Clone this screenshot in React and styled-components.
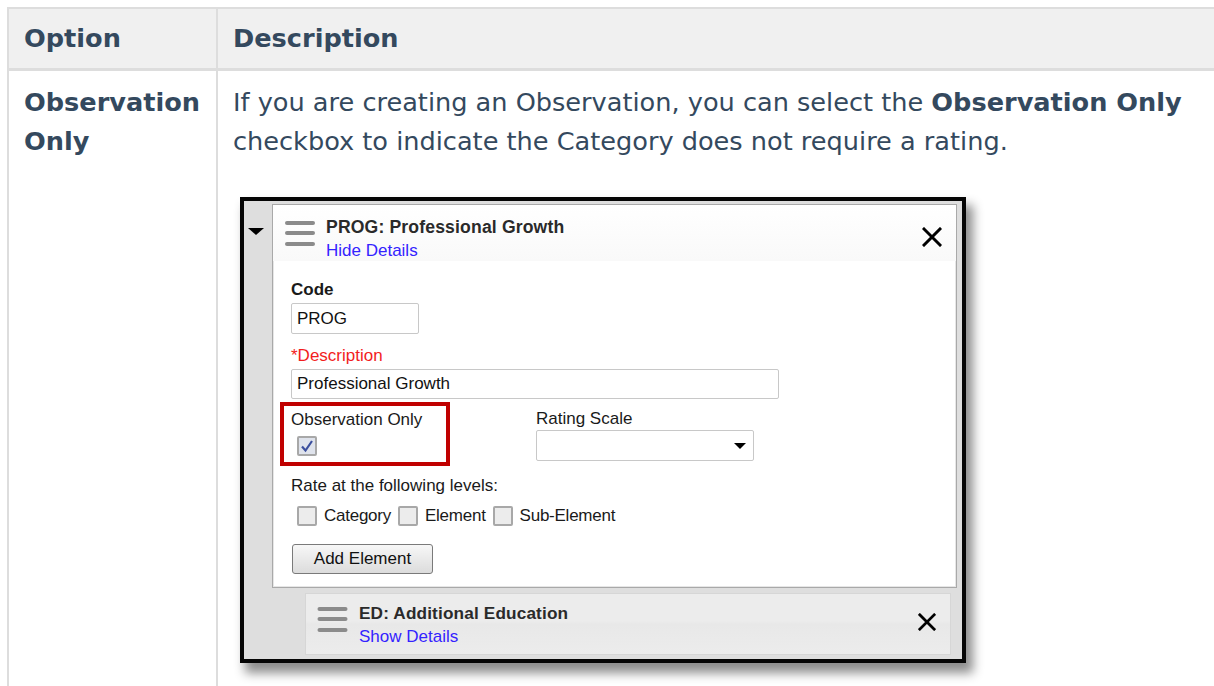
import React from "react"
import styled, { createGlobalStyle } from "styled-components"

const GlobalStyle = createGlobalStyle`
    body {
        margin: 0;
        background: #fff;
        overflow: hidden;
        font-family: "DejaVu Sans", sans-serif;
    }
`;

const HamburgerIcon = ({ width = 30 }) =>
    <Hamburger width={width} height="28" viewBox="0 0 30 28">
        <line x1="2" y1="4" x2="28" y2="4"/>
        <line x1="2" y1="14" x2="28" y2="14"/>
        <line x1="2" y1="25" x2="28" y2="25"/>
    </Hamburger>;

const CloseIcon = ({ size = 20 }) =>
    <svg width={size} height={size} viewBox="0 0 20 20">
        <path d="M2 2 L18 18 M18 2 L2 18" stroke="#000" strokeWidth="3" strokeLinecap="square"/>
    </svg>;

const CheckBox = ({ checked }) =>
    <Box checked={checked}>
        {checked &&
            <svg width="14" height="14" viewBox="0 0 14 14">
                <path d="M2 7.5 L5.5 11.5 L12 2" fill="none" stroke="#3b4f9e" strokeWidth="2.2"/>
            </svg>}
    </Box>;

const CategoryEditor = () =>
    <Frame>
        <Strip>
            <Caret/>
        </Strip>
        <Stack>
            <Panel>
                <PanelHeader>
                    <HamburgerIcon/>
                    <HeaderText>
                        <ItemTitle size={17.6}>PROG: Professional Growth</ItemTitle>
                        <ItemLink>Hide Details</ItemLink>
                    </HeaderText>
                    <CloseSlot><CloseIcon/></CloseSlot>
                </PanelHeader>
                <PanelBody>
                    <FieldLabel bold>Code</FieldLabel>
                    <Input width={128}>PROG</Input>
                    <FieldLabel required top={11}>*Description</FieldLabel>
                    <Input width={488} height={30}>Professional Growth</Input>
                    <FieldRow>
                        <Highlight>
                            <FieldLabel>Observation Only</FieldLabel>
                            <CheckIndent><CheckBox checked/></CheckIndent>
                        </Highlight>
                        <RatingColumn>
                            <FieldLabel>Rating Scale</FieldLabel>
                            <Select>
                                <SelectArrow/>
                            </Select>
                        </RatingColumn>
                    </FieldRow>
                    <FieldLabel top={9}>Rate at the following levels:</FieldLabel>
                    <LevelRow>
                        <CheckBox/><span>Category</span>
                        <CheckBox/><span>Element</span>
                        <CheckBox/><span>Sub-Element</span>
                    </LevelRow>
                    <Button>Add Element</Button>
                </PanelBody>
            </Panel>
            <CollapsedItem>
                <HamburgerIcon width={31}/>
                <HeaderText>
                    <ItemTitle size={17.2}>ED: Additional Education</ItemTitle>
                    <ItemLink>Show Details</ItemLink>
                </HeaderText>
                <CloseSlot><CloseIcon size={18}/></CloseSlot>
            </CollapsedItem>
        </Stack>
    </Frame>;

const App = () =>
    <>
        <GlobalStyle/>
        <Table>
            <thead>
                <tr>
                    <HeadCell first>Option</HeadCell>
                    <HeadCell>Description</HeadCell>
                </tr>
            </thead>
            <tbody>
                <tr>
                    <Cell first><strong>Observation Only</strong></Cell>
                    <Cell>
                        <Paragraph>
                            If you are creating an Observation, you can select the <strong>Observation Only</strong> checkbox to indicate the Category does not require a rating.
                        </Paragraph>
                        <CategoryEditor/>
                    </Cell>
                </tr>
            </tbody>
        </Table>
    </>;

const Table = styled.table`
    margin: 7px 0 0 7px;
    width: 1240px;
    border-collapse: collapse;
    color: #34495e;
    font-size: 25.6px;
    line-height: 38.4px;
`;

const HeadCell = styled.th`
    text-align: left;
    font-weight: bold;
    background: #f0f0f0;
    padding: 10px 15px 11px;
    border-top: 2px solid #ddd;
    border-bottom: 3px solid #ddd;
    border-left: 2px solid #ddd;
    width: ${props => props.first ? "177px" : "auto"};
`;

const Cell = styled.td`
    vertical-align: top;
    padding: 12px 15px 0;
    border-left: 2px solid #ddd;
    strong { font-weight: bold; }
`;

const Paragraph = styled.p`
    margin: 0 0 37px;
`;

/* embedded form screenshot */
const Frame = styled.div`
    width: 726px;
    height: 466px;
    box-sizing: border-box;
    margin: 0 0 40px 7px;
    border: 4px solid #050505;
    background: #dedede;
    box-shadow: 6px 9px 10px 1px rgba(0, 0, 0, 0.45);
    display: flex;
    font-family: "Liberation Sans", Arial, sans-serif;
    font-size: 17px;
    line-height: 22px;
    color: #1a1a1a;
`;

const Strip = styled.div`
    width: 28px;
    padding-top: 27px;
    display: flex;
    justify-content: center;
    align-items: flex-start;
`;

const Caret = styled.div`
    width: 0;
    height: 0;
    margin-left: -4px;
    border-left: 8px solid transparent;
    border-right: 8px solid transparent;
    border-top: 7px solid #000;
`;

const Stack = styled.div`
    flex: 1;
    padding: 3px 5px 0 0;
    display: flex;
    flex-direction: column;
    gap: 5px;
`;

const Panel = styled.div`
    height: 384px;
    box-sizing: border-box;
    background: #fff;
    border: 1px solid #a9a9a9;
    box-shadow: inset 0 0 0 1px #e6e6e6;
`;

const PanelHeader = styled.div`
    height: 56px;
    box-sizing: border-box;
    padding: 11px 0 0 12px;
    display: flex;
    align-items: flex-start;
    background: linear-gradient(#fff, #f9f9f9);
`;

const Hamburger = styled.svg`
    flex: none;
    margin: 3px 11px 0 0;
    line {
        stroke: #8b8b8b;
        stroke-width: 4;
        stroke-linecap: round;
    }
`;

const HeaderText = styled.div`
    flex: 1;
    display: flex;
    flex-direction: column;
    line-height: 23px;
`;

const ItemTitle = styled.span`
    font-weight: bold;
    font-size: ${props => props.size}px;
    letter-spacing: 0.15px;
    color: #2a2a2a;
`;

const ItemLink = styled.span`
    color: #3423ff;
`;

const CloseSlot = styled.div`
    padding: 11px 14px 0 0;
`;

const PanelBody = styled.div`
    padding: 18px 0 0 18px;
    display: flex;
    flex-direction: column;
    align-items: flex-start;
`;

const FieldLabel = styled.div`
    margin-top: ${props => props.top || 0}px;
    font-weight: ${props => props.bold ? "bold" : "normal"};
    color: ${props => props.required ? "#f21d1d" : "#1a1a1a"};
    white-space: nowrap;
`;

const Input = styled.div`
    width: ${props => props.width}px;
    height: ${props => props.height || 31}px;
    box-sizing: border-box;
    margin-top: 2px;
    padding: 0 5px;
    border: 1px solid #c8c8c8;
    border-radius: 2px;
    display: flex;
    align-items: center;
    color: #111;
`;

const FieldRow = styled.div`
    margin-top: 3px;
    display: flex;
    align-items: flex-start;
`;

const Highlight = styled.div`
    width: 170px;
    height: 64px;
    box-sizing: border-box;
    margin-left: -11px;
    padding: 3px 0 0 7px;
    border: 4px solid #c00000;
`;

const CheckIndent = styled.div`
    margin: 5px 0 0 6px;
`;

const Box = styled.span`
    width: 20px;
    height: 20px;
    box-sizing: border-box;
    flex: none;
    border: 2px solid #a8a8a8;
    border-radius: 2px;
    background: ${props => props.checked ? "#dfe3ec" : "#ececec"};
    display: flex;
    align-items: center;
    justify-content: center;
`;

const RatingColumn = styled.div`
    margin-left: 86px;
    padding-top: 6px;
`;

const Select = styled.div`
    width: 218px;
    height: 31px;
    box-sizing: border-box;
    border: 1px solid #c8c8c8;
    border-radius: 2px;
    display: flex;
    align-items: center;
    justify-content: flex-end;
    padding-right: 7px;
`;

const SelectArrow = styled.div`
    width: 0;
    height: 0;
    border-left: 6px solid transparent;
    border-right: 6px solid transparent;
    border-top: 6px solid #000;
`;

const LevelRow = styled.div`
    margin: 8px 0 0 6px;
    display: flex;
    align-items: center;
    gap: 5px;
    letter-spacing: -0.25px;
    span { margin-right: 2px; }
`;

const Button = styled.div`
    margin: 17px 0 0 1px;
    width: 141px;
    height: 30px;
    box-sizing: border-box;
    border: 1px solid #7a7a7a;
    border-radius: 3px;
    background: linear-gradient(#f7f7f7, #dcdcdc);
    display: flex;
    align-items: center;
    justify-content: center;
    color: #111;
`;

const CollapsedItem = styled.div`
    margin-left: 33px;
    margin-right: 6px;
    height: 62px;
    box-sizing: border-box;
    padding: 8px 0 0 11px;
    display: flex;
    align-items: flex-start;
    background: linear-gradient(#ececec 45%, #e8e8e8 50%, #ececec);
    border: 1px solid #d6d6d6;
`;

export default App
